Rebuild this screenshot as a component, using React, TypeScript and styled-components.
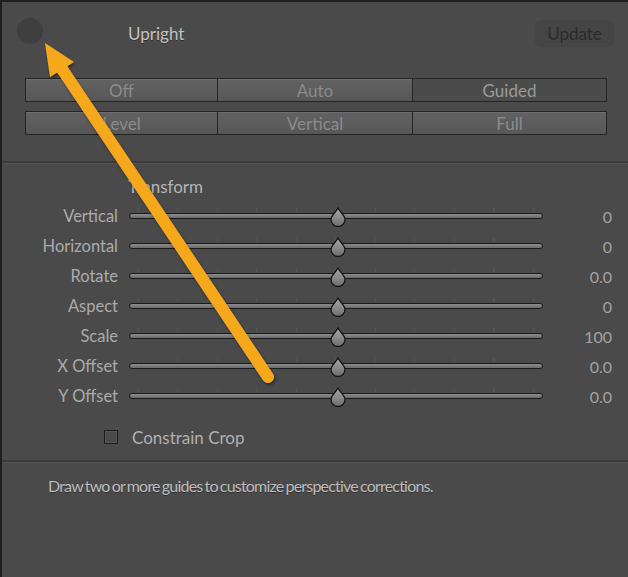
import React from "react";
import styled, { createGlobalStyle } from "styled-components";

const GlobalStyle = createGlobalStyle`
  html, body {
    margin: 0;
    padding: 0;
    background: #4a4a4a;
  }
  body {
    font-family: Lato, "Open Sans", sans-serif;
  }
`;

const Panel = styled.div`
  position: relative;
  width: 628px;
  height: 577px;
  box-sizing: border-box;
  background: #4a4a4a;
  border-top: 2px solid #1f1f1f;
  border-left: 2px solid #1f1f1f;
  overflow: hidden;
`;

const Header = styled.div`
  display: flex;
  align-items: center;
  height: 62px;
  padding: 0 14px 0 15px;
`;

const Dot = styled.div`
  width: 26px;
  height: 26px;
  margin-bottom: 4px;
  border-radius: 50%;
  background: #3f3f3f;
`;

const Title = styled.div`
  margin-left: 85px;
  font-size: 17px;
  color: #c2c2c2;
  text-shadow: 0 1px 0 rgba(0, 0, 0, 0.35);
`;

const UpdateButton = styled.div`
  margin-left: auto;
  width: 79px;
  height: 27px;
  border-radius: 7px;
  background: #454545;
  color: #2c2c2c;
  font-size: 17px;
  display: flex;
  align-items: center;
  justify-content: center;
`;

const ButtonGrid = styled.div`
  margin: 14px 0 0 23px;
  width: 582px;
  display: grid;
  grid-template-columns: 193px 195px 194px;
  grid-auto-rows: 24px;
  row-gap: 9px;
`;

const SegButton = styled.div<{ $active?: boolean; $first?: boolean }>`
  box-sizing: border-box;
  border: 1px solid #242424;
  border-left-width: ${(p) => (p.$first ? "1px" : "0")};
  background: ${(p) =>
    p.$active ? "#4b4b4b" : "linear-gradient(#626262, #575757)"};
  color: ${(p) => (p.$active ? "#9a9a9a" : "#8b8b8b")};
  font-size: 17px;
  display: flex;
  align-items: center;
  justify-content: center;
  box-shadow: ${(p) =>
    p.$active ? "none" : "inset 0 1px 0 rgba(255,255,255,0.08)"};
`;

const Divider = styled.div<{ $top: number }>`
  margin-top: ${(p) => p.$top}px;
  height: 2px;
  background: #3c3c3c;
  border-bottom: 1px solid #525252;
`;

const SectionTitle = styled.div`
  margin: 11px 0 0 126px;
  height: 24px;
  line-height: 24px;
  font-size: 17px;
  color: #b4b4b4;
`;

const SliderList = styled.div`
  margin-top: 2px;
  display: flex;
  flex-direction: column;
`;

const SliderRow = styled.div`
  display: flex;
  align-items: center;
  height: 30px;
`;

const SliderLabel = styled.div`
  width: 116px;
  text-align: right;
  font-size: 16.5px;
  color: #ababab;
`;

const SliderCell = styled.div`
  position: relative;
  margin-left: 11px;
  width: 414px;
  height: 30px;
  display: flex;
  flex-direction: column;
  justify-content: center;
`;

const Ticks = styled.div`
  margin-left: 9px;
  width: 397px;
  height: 4px;
  margin-bottom: 1px;
  background: repeating-linear-gradient(
    to right,
    #535353 0 1px,
    transparent 1px 39.5px
  );
`;

const Track = styled.div`
  box-sizing: border-box;
  height: 6px;
  border: 1px solid #1a1a1a;
  border-radius: 3px;
  background: linear-gradient(#8d8d8d, #6a6a6a);
  margin-bottom: 5px;
`;

const Thumb = styled.svg`
  position: absolute;
  left: 201px;
  top: 6px;
`;

const SliderValue = styled.div`
  flex: 1;
  text-align: right;
  padding-right: 16px;
  font-size: 16px;
  color: #a2a2a2;
`;

const CheckRow = styled.div`
  margin: 13px 0 0 102px;
  height: 26px;
  display: flex;
  align-items: center;
  gap: 14px;
`;

const CheckBox = styled.div`
  box-sizing: border-box;
  width: 14px;
  height: 14px;
  border: 1px solid #1c1c1c;
  background: #4a4a4a;
  box-shadow: inset 0 0 0 1px #575757;
`;

const CheckLabel = styled.div`
  font-size: 17px;
  color: #b0b0b0;
`;

const HelpText = styled.div`
  margin: 11px 0 0 46px;
  height: 24px;
  line-height: 24px;
  font-size: 16px;
  letter-spacing: -0.8px;
  word-spacing: -1.2px;
  color: #bcbcbc;
  text-shadow: 0 1px 0 rgba(0, 0, 0, 0.35);
`;

const ArrowLayer = styled.svg`
  position: absolute;
  left: -2px;
  top: -2px;
  pointer-events: none;
`;

const sliders = [
  { label: "Vertical", value: "0" },
  { label: "Horizontal", value: "0" },
  { label: "Rotate", value: "0.0" },
  { label: "Aspect", value: "0" },
  { label: "Scale", value: "100" },
  { label: "X Offset", value: "0.0" },
  { label: "Y Offset", value: "0.0" },
];

const modes = ["Off", "Auto", "Guided", "Level", "Vertical", "Full"];

function ThumbIcon() {
  return (
    <Thumb width="16" height="20" viewBox="0 0 16 20">
      <defs>
        <linearGradient id="thumbFill" x1="0" y1="0" x2="0" y2="1">
          <stop offset="0" stopColor="#a8a8a8" />
          <stop offset="1" stopColor="#6e6e6e" />
        </linearGradient>
      </defs>
      <path
        d="M8 1 C10 5 15 8.5 15 12.5 A7 7 0 0 1 1 12.5 C1 8.5 6 5 8 1 Z"
        fill="url(#thumbFill)"
        stroke="#151515"
        strokeWidth="1.3"
      />
    </Thumb>
  );
}

export default function App() {
  return (
    <Panel>
      <GlobalStyle />
      <Header>
        <Dot />
        <Title>Upright</Title>
        <UpdateButton>Update</UpdateButton>
      </Header>

      <ButtonGrid>
        {modes.map((m, i) => (
          <SegButton key={m} $active={m === "Guided"} $first={i % 3 === 0}>
            {m}
          </SegButton>
        ))}
      </ButtonGrid>

      <Divider $top={26} />

      <SectionTitle>Transform</SectionTitle>

      <SliderList>
        {sliders.map((s) => (
          <SliderRow key={s.label}>
            <SliderLabel>{s.label}</SliderLabel>
            <SliderCell>
              <Ticks />
              <Track />
              <ThumbIcon />
            </SliderCell>
            <SliderValue>{s.value}</SliderValue>
          </SliderRow>
        ))}
      </SliderList>

      <CheckRow>
        <CheckBox />
        <CheckLabel>Constrain Crop</CheckLabel>
      </CheckRow>

      <Divider $top={10} />

      <HelpText>Draw two or more guides to customize perspective corrections.</HelpText>

      <ArrowLayer width="628" height="577" viewBox="0 0 628 577">
        <defs>
          <filter id="arrowShadow" x="-20%" y="-20%" width="140%" height="140%">
            <feDropShadow dx="1" dy="2" stdDeviation="1.5" floodColor="#000" floodOpacity="0.45" />
          </filter>
        </defs>
        <g filter="url(#arrowShadow)" fill="#f6a81e">
          <line
            x1="268"
            y1="377"
            x2="60"
            y2="66"
            stroke="#f6a81e"
            strokeWidth="12"
            strokeLinecap="round"
          />
          <polygon points="45,43 50,77 74,62" />
        </g>
      </ArrowLayer>
    </Panel>
  );
}
